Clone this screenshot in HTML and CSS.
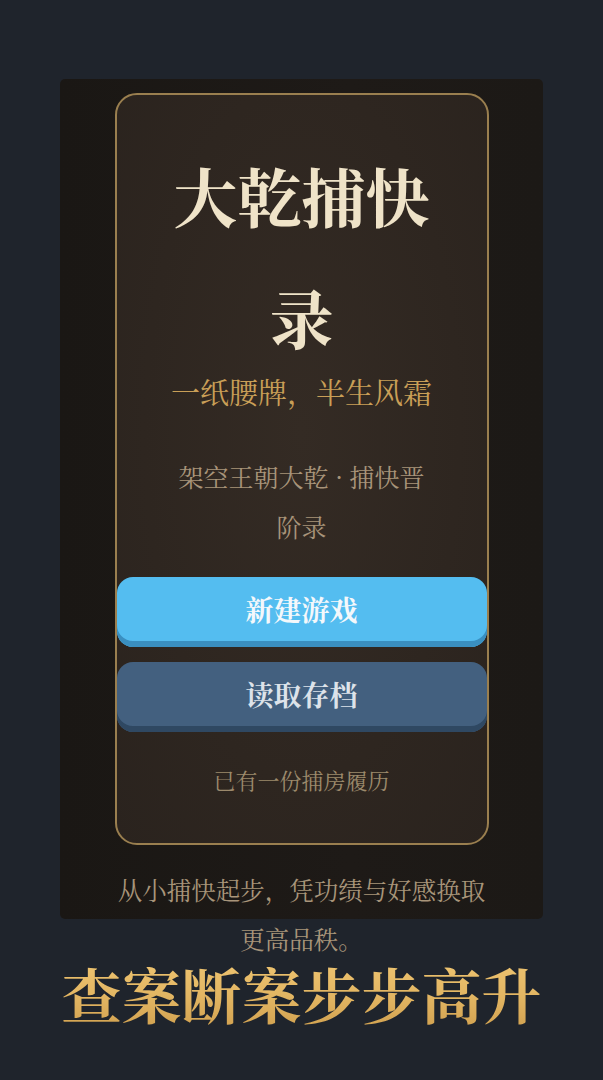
FILE: index.html
```html
<!DOCTYPE html>
<html lang="zh-CN">
<head>
<meta charset="utf-8">
<title>大乾捕快录</title>
<link rel="stylesheet" href="styles.css">
</head>
<body>
  <main class="stage">
    <section class="panel">
      <div class="card">
        <h1 class="title">大乾捕快录</h1>
        <p class="motto">一纸腰牌，半生风霜</p>
        <p class="setting">架空王朝大乾 · 捕快晋阶录</p>
        <div class="actions">
          <button class="btn btn-new">新建游戏</button>
          <button class="btn btn-load">读取存档</button>
        </div>
        <p class="save-note">已有一份捕房履历</p>
      </div>
      <p class="blurb">从小捕快起步，凭功绩与好感换取更高品秩。</p>
    </section>
    <h2 class="tagline">查案断案步步高升</h2>
  </main>
</body>
</html>
```
FILE: styles.css
```css
* {
  box-sizing: border-box;
}

html, body {
  margin: 0;
  padding: 0;
}

body {
  width: 603px;
  height: 1080px;
  overflow: hidden;
  background: #1f242c;
  font-family: "Noto Serif CJK SC", "Noto Sans CJK SC", serif;
}

.stage {
  display: flex;
  flex-direction: column;
  align-items: center;
  padding-top: 79px;
}

.panel {
  width: 483px;
  height: 840px;
  background: linear-gradient(90deg, #1a1714 0%, #1e1a17 60%, #1c1916 100%);
  border-radius: 5px;
  padding-top: 14px;
  display: flex;
  flex-direction: column;
  align-items: center;
}

.card {
  width: 374px;
  border: 2px solid #9a7f4f;
  border-radius: 22px;
  background: radial-gradient(ellipse at 50% 45%, #342b24 0%, #2e2620 60%, #2a231e 100%);
  padding: 38px 0 48px;
  display: flex;
  flex-direction: column;
  align-items: center;
  text-align: center;
}

.title {
  margin: 0;
  padding: 0 36px;
  font-size: 64px;
  line-height: 122px;
  font-weight: 700;
  color: #efe3c8;
}

.motto {
  margin: 0;
  font-size: 29px;
  line-height: 30px;
  color: #c99f57;
}

.setting {
  margin: 44px 0 0;
  padding: 0 52px;
  font-size: 25px;
  line-height: 50px;
  color: #a8947a;
}

.actions {
  width: 100%;
  margin-top: 26px;
  display: flex;
  flex-direction: column;
  gap: 15px;
}

.btn {
  width: 100%;
  height: 70px;
  padding: 0 0 6px;
  border: 0;
  border-radius: 16px;
  font-family: inherit;
  font-size: 28px;
  font-weight: 700;
  line-height: 64px;
}

.btn-new {
  background: #54bdf0;
  box-shadow: inset 0 -6px 0 #3a8fc0;
  color: #f4f8fb;
}

.btn-load {
  background: #43607f;
  box-shadow: inset 0 -6px 0 #2f4862;
  color: #dde3ea;
}

.save-note {
  margin: 33px 0 0;
  font-size: 22px;
  line-height: 30px;
  color: #9c8a6c;
}

.blurb {
  margin: 20px 0 0;
  padding: 0 50px;
  text-align: center;
  font-size: 24.5px;
  line-height: 49px;
  color: #a8957a;
}

.tagline {
  margin: 34px 0 0;
  font-size: 60px;
  line-height: 80px;
  font-weight: 700;
  letter-spacing: 0;
  background: linear-gradient(180deg, #f0c774 0%, #e2b562 55%, #cf9f4e 100%);
  -webkit-background-clip: text;
  background-clip: text;
  color: transparent;
}
```
